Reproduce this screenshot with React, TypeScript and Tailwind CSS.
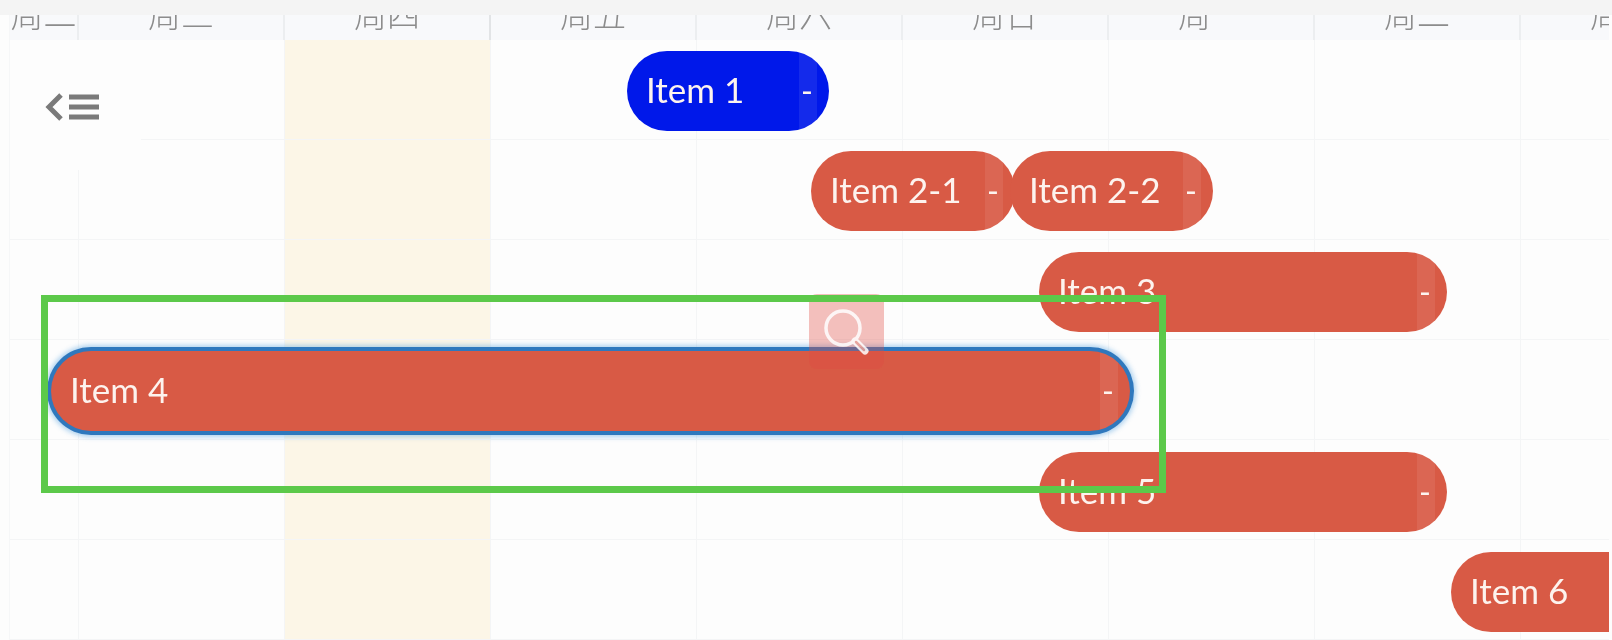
type Bar = {
  label: string;
  offset: string;
  width: string;
  color: string;
  active?: boolean;
  noHandle?: boolean;
};

const days = [
  { label: '周二', width: 'w-[69px]' },
  { label: '周三', width: 'w-[206px]' },
  { label: '周四', width: 'w-[206px]', today: true },
  { label: '周五', width: 'w-[206px]' },
  { label: '周六', width: 'w-[206px]' },
  { label: '周日', width: 'w-[206px]' },
  { label: '周一', width: 'w-[206px]' },
  { label: '周二', width: 'w-[206px]' },
  { label: '周三', width: 'w-[206px]' },
];

const rows: Bar[][] = [
  [{ label: 'Item 1', offset: 'ml-[617px]', width: 'w-[202px]', color: 'bg-[#0018ea]' }],
  [
    { label: 'Item 2-1', offset: 'ml-[801px]', width: 'w-[204px]', color: 'bg-[#d85a45]' },
    { label: 'Item 2-2', offset: '-ml-[5px]', width: 'w-[203px]', color: 'bg-[#d85a45]' },
  ],
  [{ label: 'Item 3', offset: 'ml-[1029px] mt-[1px]', width: 'w-[408px]', color: 'bg-[#d85a45]' }],
  [{ label: 'Item 4', offset: 'ml-[41px]', width: 'w-[1079px]', color: 'bg-[#d85a45]', active: true }],
  [{ label: 'Item 5', offset: 'ml-[1029px] mt-[1px]', width: 'w-[408px]', color: 'bg-[#d85a45]' }],
  [{ label: 'Item 6', offset: 'ml-[1441px] mt-[1px]', width: 'w-[300px]', color: 'bg-[#d85a45]', noHandle: true }],
];

function TimelineBar({ bar }: { bar: Bar }) {
  return (
    <div
      className={`relative z-10 flex h-[80px] shrink-0 items-center overflow-hidden rounded-[40px] pl-[19px] text-[35px] text-[#fdf3ee] ${bar.offset} ${bar.width} ${bar.color} ${
        bar.active ? 'shadow-[0_0_0_4px_#2f78bd,0_0_5px_6px_rgba(80,160,225,0.45)]' : ''
      }`}
    >
      <span className="-translate-y-[2px]">{bar.label}</span>
      {!bar.noHandle && (
        <span className="absolute top-0 right-[12px] flex h-full w-[18px] items-center justify-center bg-white/[0.08] text-[32px] leading-none">
          <span className="-translate-x-[1px]">-</span>
        </span>
      )}
    </div>
  );
}

export default function App() {
  return (
    <div className="relative flex h-[640px] w-[1612px] flex-col overflow-hidden bg-[#f4f4f4] font-['Lato',sans-serif] blur-[0.6px]">
      <div className="h-[15px] shrink-0 bg-[#f4f4f4]" />

      <div className="flex min-h-0 flex-1 bg-[#fdfdfd]">
        <div className="ml-[9px] flex w-[1600px] flex-col overflow-hidden border-l border-[#f6f7f8]">
          <div className="flex h-[25px] shrink-0 overflow-hidden bg-[#f8f9fb]">
            {days.map((d, i) => (
              <div
                key={i}
                className={`flex h-[25px] shrink-0 justify-center border-r-2 font-['Noto_Sans_CJK_SC',sans-serif] text-[33px] font-light leading-[33px] text-[#8c8c8c] ${d.width} ${
                  d.today ? 'border-[#e2e4e6]' : 'border-[#eceef0]'
                }`}
              >
                <span className="-mt-[18px] block">{d.label}</span>
              </div>
            ))}
          </div>

          <div className="relative min-h-0 flex-1">
            {/* Column lines behind the rows */}
            <div className="absolute inset-0 flex">
              {days.map((d, i) => (
                <div
                  key={i}
                  className={`h-full shrink-0 border-r border-[#f4f5f6] ${d.width} ${d.today ? 'bg-[#fcf6e7]' : ''}`}
                />
              ))}
            </div>

            <div className="relative flex flex-col">
              {rows.map((row, i) => (
                <div key={i} className="flex h-[100px] shrink-0 border-b border-[#f4f5f6] pt-[11px]">
                  {row.map((bar) => (
                    <TimelineBar key={bar.label} bar={bar} />
                  ))}
                </div>
              ))}
            </div>

            {/* Collapse button */}
            <div className="absolute top-0 left-0 z-10 flex h-[130px] w-[131px] items-center justify-center bg-[#fdfdfd] pr-[6px]">
              <svg width="58" height="30" viewBox="0 0 58 30" fill="none" stroke="#7a7a7a" className="mt-[3px]">
                <path d="M17 3 L5 15 L17 27" strokeWidth="5" />
                <path d="M25 5 H55 M25 15 H55 M25 25 H55" strokeWidth="5" />
              </svg>
            </div>
          </div>
        </div>
      </div>

      {/* Zoom overlay and selection rectangle */}
      <div className="absolute top-[294px] left-[809px] z-20 flex h-[75px] w-[75px] items-center justify-center rounded-[8px] bg-[#e04a42]/35">
        <svg width="52" height="52" viewBox="0 0 52 52" fill="none" stroke="#ffffff" className="opacity-85">
          <circle cx="22" cy="22" r="17" strokeWidth="3.5" />
          <path d="M34 35 L44 45" strokeWidth="7" strokeLinecap="round" />
          <path d="M35 36 L43 44" strokeWidth="2.5" stroke="#e7a29b" strokeLinecap="round" />
        </svg>
      </div>
      <div className="absolute top-[295px] left-[41px] z-30 h-[198px] w-[1125px] border-[7px] border-[#5cc94a]" />
    </div>
  );
}
